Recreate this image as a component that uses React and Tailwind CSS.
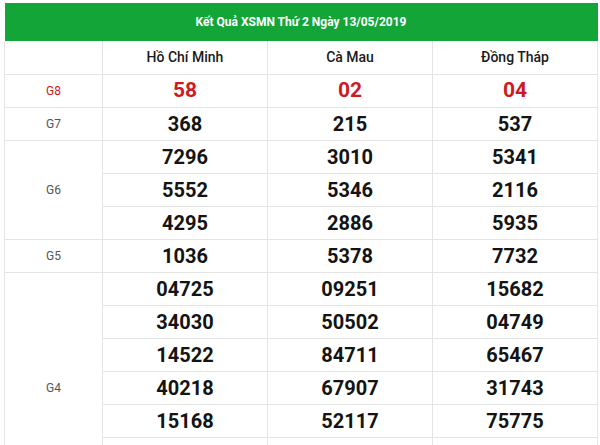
import React from "react";

// kết quả xổ số miền nam
const cities = ["Hồ Chí Minh", "Cà Mau", "Đồng Tháp"];

// two last G4 rows sit below the fold in the screenshot
const prizes = [
  { name: "G8", red: true, rows: [["58", "02", "04"]] },
  { name: "G7", rows: [["368", "215", "537"]] },
  {
    name: "G6",
    rows: [
      ["7296", "3010", "5341"],
      ["5552", "5346", "2116"],
      ["4295", "2886", "5935"],
    ],
  },
  { name: "G5", rows: [["1036", "5378", "7732"]] },
  {
    name: "G4",
    rows: [
      ["04725", "09251", "15682"],
      ["34030", "50502", "04749"],
      ["14522", "84711", "65467"],
      ["40218", "67907", "31743"],
      ["15168", "52117", "75775"],
      ["", "", ""],
      ["", "", ""],
    ],
  },
];

export default function App() {
  return (
    <div className="bg-white pt-[3px] pl-[4px] w-[600px] font-['Roboto','Liberation_Sans',sans-serif]">
      <table className="w-[593px] border-collapse table-fixed">
        <colgroup>
          <col className="w-[98px]" />
          <col className="w-[165px]" />
          <col className="w-[165px]" />
          <col className="w-[165px]" />
        </colgroup>
        <thead>
          <tr>
            <th
              colSpan={4}
              className="h-[38px] bg-[#13a538] text-white text-[12px] font-bold text-center p-0"
            >
              Kết Quả XSMN Thứ 2 Ngày 13/05/2019
            </th>
          </tr>
          <tr className="h-[33px]">
            <th className="border border-[#e4e4e4] border-t-0 p-0"></th>
            {cities.map((c) => (
              <th
                key={c}
                className="border border-[#e4e4e4] border-t-0 p-0 text-[14px] font-medium text-[#1a1a1a] text-center"
              >
                {c}
              </th>
            ))}
          </tr>
        </thead>
        <tbody>
          {prizes.map((p) =>
            p.rows.map((r, i) => (
              <tr key={p.name + i} className="h-[33px]">
                {i === 0 && (
                  <td
                    rowSpan={p.rows.length}
                    className={`border border-[#e4e4e4] p-0 text-center text-[12px] ${
                      p.red ? "text-[#d0191f]" : "text-[#555]"
                    }`}
                  >
                    {p.name}
                  </td>
                )}
                {r.map((n, j) => (
                  <td
                    key={j}
                    className={`border border-[#e4e4e4] p-0 text-center font-bold leading-none ${
                      p.red ? "text-[#d0191f] text-[21px]" : "text-[#141414] text-[20px]"
                    }`}
                  >
                    {n}
                  </td>
                ))}
              </tr>
            ))
          )}
        </tbody>
      </table>
    </div>
  );
}
